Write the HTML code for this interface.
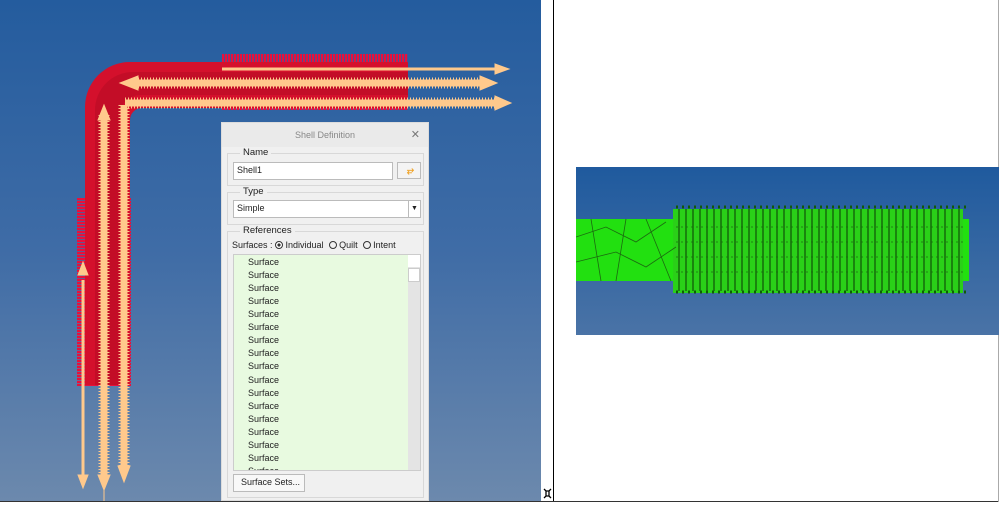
<!DOCTYPE html>
<html><head><style>
body{margin:0;width:999px;height:505px;position:relative;background:#fff;overflow:hidden;font-family:"Liberation Sans",sans-serif}
.l{position:absolute;left:0;top:0;width:541px;height:501px;background:linear-gradient(#245c9e,#3f6ca6 50%,#6c89ad)}
.dlg{position:absolute;left:221px;top:122px;width:208px;height:379px;background:#f0f0f0;border:1px solid #dcdcdc;box-sizing:border-box;font-size:9px;color:#222}
.grp{position:absolute;left:5px;width:197px;border:1px solid #d8d8d8;box-sizing:border-box}
.lg{position:absolute;left:12px;top:-7px;background:#f0f0f0;padding:0 3px;font-size:9.5px}
.box{position:absolute;background:#fff;border:1px solid #bbb;box-sizing:border-box;padding-left:3px;line-height:15px}
.it{position:absolute;left:14px;font-size:9px}
.rad{display:inline-block;width:8px;height:8px;border:1px solid #333;border-radius:50%;vertical-align:-1px;box-sizing:border-box}
</style></head><body>
<div class="l"></div>
<svg style="position:absolute;left:0;top:0" width="541" height="501">
<defs>
<pattern id="hv" width="3" height="10" patternUnits="userSpaceOnUse"><rect width="2.2" height="10" fill="#e8103c"/></pattern>
<pattern id="hh" width="10" height="3" patternUnits="userSpaceOnUse"><rect width="10" height="2.2" fill="#e8103c"/></pattern>
</defs>
<rect x="222" y="54" width="186" height="56" fill="url(#hv)"/>
<rect x="77" y="198" width="54" height="188" fill="url(#hh)"/>
<path d="M85 385V107A45 45 0 0 1 130 62H408V108H142A12 12 0 0 0 130 120V385Z" fill="#d4102c"/>
<path d="M95 385V110A38 38 0 0 1 133 72H408V95H140A20 20 0 0 0 120 115V385Z" fill="#b00a22" opacity=".45"/>
<g stroke="#ffc98c" fill="#ffc98c">
<path d="M222 69H495" stroke-width="3"/><path d="M495 64L509 69L495 74Z"/>
<path d="M135 83H480" stroke-width="7"/><path d="M480 76L497 83L480 90Z"/><path d="M120 83L138 76V90Z"/>
<path d="M125 103H495" stroke-width="7"/><path d="M495 96L511 103L495 110Z"/>
<path d="M83 280V475" stroke-width="3"/><path d="M78 475L83 488L88 475Z"/><path d="M78 275L83 262L88 275Z"/>
<path d="M104 115V475" stroke-width="7"/><path d="M98 475L104 490L110 475Z"/><path d="M98 120L104 105L110 120Z"/>
<path d="M124 105V468" stroke-width="7"/><path d="M118 466L124 482L130 466Z"/>
</g>
<g stroke="#ffc98c" stroke-width="11" stroke-dasharray="1 2" fill="none">
<path d="M135 83H480M125 103H495M104 115V475M124 105V468"/>
</g>
<path d="M104 490V501" stroke="#ffc98c"/>
</svg>
<div class="dlg">
<div style="position:absolute;left:0;top:0;width:100%;height:24px;background:#eaeaea;text-align:center;line-height:24px;color:#888">Shell Definition<span style="position:absolute;right:8px;color:#777;font-size:11px">✕</span></div>
<div class="grp" style="top:30px;height:33px"><span class="lg">Name</span>
<div class="box" style="left:5px;top:8px;width:160px;height:18px">Shell1</div>
<div class="box" style="left:169px;top:8px;width:24px;height:17px;background:#f4f4f4;color:#f0a020;text-align:center;font-weight:bold">⥂</div></div>
<div class="grp" style="top:69px;height:33px"><span class="lg">Type</span>
<div class="box" style="left:5px;top:7px;width:188px;height:18px">Simple<span style="position:absolute;right:0;top:0;width:11px;height:16px;border-left:1px solid #bbb;text-align:center;font-size:7px">▼</span></div></div>
<div class="grp" style="top:108px;height:267px"><span class="lg">References</span>
<div style="position:absolute;left:4px;top:8px;white-space:nowrap">Surfaces : <span class="rad" style="background:radial-gradient(#333 35%,#fff 40%)"></span> Individual &nbsp;<span class="rad"></span> Quilt &nbsp;<span class="rad"></span> Intent</div>
<div style="position:absolute;left:5px;top:22px;width:188px;height:217px;background:#e8fae0;border:1px solid #ccc;box-sizing:border-box;overflow:hidden">
<div style="position:absolute;right:0;top:0;width:12px;height:100%;background:#e4e4e4"><div style="height:12px;background:#fff"></div><div style="height:12px;margin-top:1px;background:#fff;border:1px solid #ccc"></div></div>
<div class="it" style="top:2px">Surface</div><div class="it" style="top:15px">Surface</div><div class="it" style="top:28px">Surface</div><div class="it" style="top:41px">Surface</div><div class="it" style="top:54px">Surface</div><div class="it" style="top:67px">Surface</div><div class="it" style="top:80px">Surface</div><div class="it" style="top:93px">Surface</div><div class="it" style="top:106px">Surface</div><div class="it" style="top:120px">Surface</div><div class="it" style="top:133px">Surface</div><div class="it" style="top:146px">Surface</div><div class="it" style="top:159px">Surface</div><div class="it" style="top:172px">Surface</div><div class="it" style="top:185px">Surface</div><div class="it" style="top:198px">Surface</div><div class="it" style="top:211px">Surface</div>
</div>
<div class="box" style="left:5px;top:242px;width:72px;height:18px;background:#f8f8f8;padding-left:7px">Surface Sets...</div>
</div>
</div>
<div style="position:absolute;left:553px;top:0;width:1px;height:502px;background:#000"></div>
<div style="position:absolute;left:0;top:501px;width:999px;height:1px;background:#333"></div>
<div style="position:absolute;left:998px;top:0;width:1px;height:502px;background:#aaa"></div>
<svg style="position:absolute;left:542px;top:487px" width="11" height="13"><path d="M2 2L4 4H7L9 2M2 11L4 9H7L9 11M4 4V9M7 4V9" stroke="#000" stroke-width="1.3" fill="none"/></svg>
<svg style="position:absolute;left:576px;top:167px" width="423" height="168">
<defs><linearGradient id="g" x1="0" y1="0" x2="0" y2="1"><stop offset="0" stop-color="#1f5a9e"/><stop offset="1" stop-color="#4a73a6"/></linearGradient></defs>
<rect width="423" height="168" fill="url(#g)"/>
<rect x="0" y="52" width="393" height="62" fill="#22e010"/>
<rect x="97" y="42" width="290" height="84" fill="#2ad018"/>
<g stroke="#1c6a10" fill="none" stroke-width=".8">
<path d="M0 70L30 60L60 75L90 55M0 95L40 85L70 100L100 80M15 52L25 114M50 52L40 114M70 52L95 114"/>
<path d="M100 40H390M100 125H390" stroke-width="3" stroke-dasharray="2 4" stroke="#105a08"/>
<path d="M100 60H390M100 75H390M100 90H390M100 105H390" stroke-dasharray="2 3"/>
</g>
<g stroke="#156a0a" stroke-width="1.5" fill="none">
<path d="M103 42V124M110 42V124M117 42V124M124 42V124M131 42V124M138 42V124M145 42V124M152 42V124M159 42V124M166 42V124M173 42V124M180 42V124M187 42V124M194 42V124M201 42V124M208 42V124M215 42V124M222 42V124M229 42V124M236 42V124M243 42V124M250 42V124M257 42V124M264 42V124M271 42V124M278 42V124M285 42V124M292 42V124M299 42V124M306 42V124M313 42V124M320 42V124M327 42V124M334 42V124M341 42V124M348 42V124M355 42V124M362 42V124M369 42V124M376 42V124M383 42V124"/>
</g>
</svg>
</body></html>
